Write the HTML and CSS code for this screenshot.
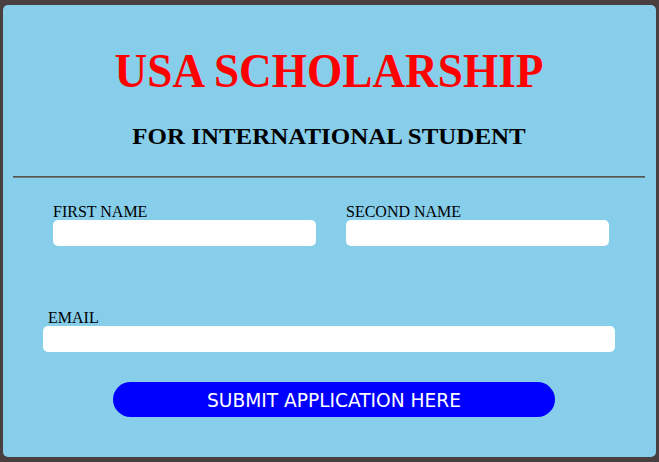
FILE: index.html
```html
<!DOCTYPE html>
<html>
<head>
<meta charset="utf-8">
<link rel="stylesheet" href="styles.css">
</head>
<body>
<div class="card">
  <h1 class="title">USA SCHOLARSHIP</h1>
  <h2 class="subtitle">FOR INTERNATIONAL STUDENT</h2>
  <hr class="divider">
  <div class="row">
    <div class="field">
      <label class="label">FIRST NAME</label>
      <input class="input" type="text">
    </div>
    <div class="field">
      <label class="label">SECOND NAME</label>
      <input class="input" type="text">
    </div>
  </div>
  <div class="email-field">
    <label class="label email-label">EMAIL</label>
    <input class="input email-input" type="text">
  </div>
  <button class="submit" type="button">SUBMIT APPLICATION HERE</button>
</div>
</body>
</html>
```
FILE: styles.css
```css
html, body {
  margin: 0;
  padding: 0;
}
body {
  background: #4a3f3f;
  width: 659px;
  height: 462px;
  padding: 5px 3px 0 3px;
  box-sizing: border-box;
  font-family: "Liberation Serif", "Times New Roman", serif;
}
.card {
  width: 653px;
  height: 452px;
  background: #87ceeb;
  border-radius: 5px;
  box-sizing: border-box;
  padding: 39px 11px 0 10px;
  display: flex;
  flex-direction: column;
}
.title {
  margin: 0;
  font-size: 48px;
  line-height: 53px;
  font-weight: bold;
  color: #ff0000;
  text-align: center;
  transform: scaleX(0.943);
  transform-origin: 50% 50%;
}
.subtitle {
  margin: 26px 0 0 0;
  font-size: 24px;
  line-height: 26px;
  font-weight: bold;
  color: #000;
  text-align: center;
  transform: scaleX(1.04);
  transform-origin: 50% 50%;
}
.divider {
  margin: 27px 0 0 0;
  border: none;
  border-top: 1px solid #555;
  border-bottom: 1px solid #6a7a80;
  height: 0;
}
.row {
  display: flex;
  gap: 30px;
  margin: 25px 0 0 40px;
}
.field {
  display: flex;
  flex-direction: column;
  width: 263px;
}
.label {
  font-size: 16px;
  line-height: 17px;
  color: #000;
  display: block;
}
.input {
  display: block;
  width: 263px;
  height: 26px;
  border: none;
  border-radius: 5px;
  background: #fff;
  padding: 0;
  margin: 0;
  outline: none;
}
.email-field {
  display: flex;
  flex-direction: column;
  margin: 63px 0 0 30px;
}
.email-label {
  margin-left: 5px;
}
.email-input {
  width: 572px;
}
.submit {
  margin: 30px 0 0 100px;
  width: 442px;
  height: 35px;
  border: none;
  border-radius: 18px;
  background: #0000ff;
  color: #fff;
  font-family: "DejaVu Sans", Verdana, sans-serif;
  font-size: 18.6px;
  padding: 2px 0 0 0;
  line-height: 33px;
  text-align: center;
}
```
